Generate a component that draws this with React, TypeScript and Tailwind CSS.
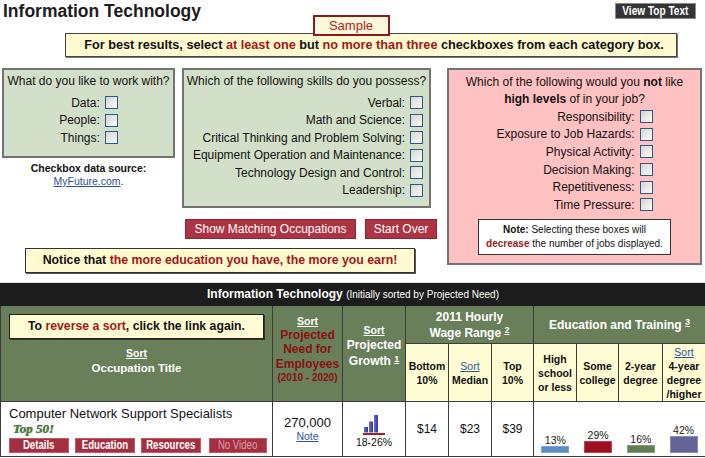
import React from "react";

const CB = () => (
  <span className="inline-block w-[13px] h-[13px] border border-[#2a5a8a] bg-linear-to-br from-[#d6d6d0] to-[#fbfbf9] shrink-0" />
);

function Row({ label, h }: { label: string; h: string }) {
  return (
    <div className={"flex items-center justify-end gap-[5px] " + h}>
      <span>{label}:</span>
      <CB />
    </div>
  );
}

const ROW = "h-[17.5px]";
const ROWP = "h-[17.6px]";

function Bar({ pct, h, color }: { pct: string; h: string; color: string }) {
  return (
    <div className="flex-1 flex flex-col items-center justify-end">
      <div className="text-[10.5px] leading-[12px] text-[#222]">{pct}</div>
      <div className={"w-[28px] border " + h + " " + color} />
    </div>
  );
}

function RedBtn({ label, muted }: { label: string; muted?: boolean }) {
  return (
    <div
      className={
        "h-[15px] bg-[#a52f3f] border border-[#c25a68] flex justify-center items-center overflow-visible " +
        (muted ? "w-[58px] ml-[2px] text-[#dba0a8] font-normal" : "w-[60px] text-white font-bold")
      }
    >
      <span className="inline-block whitespace-nowrap text-[12px] leading-[13px] scale-x-[0.8]">{label}</span>
    </div>
  );
}

export default function App() {
  return (
    <div className="w-[705px] bg-white text-[#111] font-['Liberation_Sans',Arial,sans-serif] text-[12px]">
      {/* Title row */}
      <div className="flex items-start justify-between">
        <h1 className="ml-[3px] text-[17.5px] font-bold leading-[22px] text-[#1c1c1c]">Information Technology</h1>
        <div className="mt-[3px] mr-[9px] h-[16px] w-[81px] bg-[#353535] border border-[#8a8a8a] text-white flex justify-center items-center">
          <span className="inline-block whitespace-nowrap text-[12px] font-bold leading-[14px] scale-x-[0.84]">View Top Text</span>
        </div>
      </div>
      <div className="relative z-10 -mt-[7px] flex justify-center pr-[3px]">
        <div className="w-[77px] h-[21px] border-2 border-[#8b1a1a] bg-[#fff8dc] text-[#b21a1a] text-[13px] leading-[17px] text-center">
          Sample
        </div>
      </div>
      <div className="-mt-[3px] ml-[65px] w-[612px] h-[24px] border border-[#444] shadow-[1px_1px_0_0_#777] bg-[#fffad0] text-center text-[12.7px] font-bold leading-[22px] pl-[6px]">
        For best results, select <span className="text-[#a01818]">at least one</span> but{" "}
        <span className="text-[#a01818]">no more than three</span> checkboxes from each category box.
      </div>

      {/* Category boxes */}
      <div className="flex mt-[11px] ml-[2px]">
        <div className="w-[438px]">
          <div className="flex gap-[7px] items-start">
            <div className="w-[173px]">
              <div className="h-[90px] bg-[#d3e0c9] border-2 border-[#737373] pt-[3px]">
                <div className="text-center leading-[16px]">What do you like to work with?</div>
                <div className="w-fit mx-auto mt-[5px]">
                  <Row label="Data" h={ROW} />
                  <Row label="People" h={ROW} />
                  <Row label="Things" h={ROW} />
                </div>
              </div>
              <div className="text-center text-[10.5px] leading-[13px] mt-[4px]">
                <div className="font-bold">Checkbox data source:</div>
                <div>
                  <span className="text-[#2d4f9e] underline">MyFuture.com</span>.
                </div>
              </div>
            </div>
            <div className="w-[249px] h-[140px] bg-[#d3e0c9] border-2 border-[#737373] pt-[3px]">
              <div className="text-center leading-[16px]">Which of the following skills do you possess?</div>
              <div className="w-fit mx-auto mt-[5px] pl-[3px]">
                <Row label="Verbal" h={ROW} />
                <Row label="Math and Science" h={ROW} />
                <Row label="Critical Thinking and Problem Solving" h={ROW} />
                <Row label="Equipment Operation and Maintenance" h={ROW} />
                <Row label="Technology Design and Control" h={ROW} />
                <Row label="Leadership" h={ROW} />
              </div>
            </div>
          </div>
          <div className="flex justify-end gap-[9px] mt-[11px] pr-[3px]">
            <div className="w-[171px] h-[20px] bg-[#ad3444] border border-[#8e2534] text-white text-[12px] leading-[18px] text-center">
              Show Matching Occupations
            </div>
            <div className="w-[72px] h-[20px] bg-[#ad3444] border border-[#8e2534] text-white text-[12px] leading-[18px] text-center">
              Start Over
            </div>
          </div>
          <div className="ml-[23px] w-[390px] mt-[9px] h-[25px] border border-[#333] shadow-[1px_1px_0_0_#555] bg-[#fffad0] text-center text-[12.3px] font-bold leading-[23px]">
            Notice that <span className="text-[#a01818]">the more education you have, the more you earn!</span>
          </div>
        </div>
        <div className="ml-[7px] w-[255px] h-[197px] bg-[#ffc1c1] border-2 border-[#737373] pt-[4px]">
          <div className="text-center leading-[17px]">
            Which of the following would you <b>not</b> like
            <br />
            <b>high levels</b> of in your job?
          </div>
          <div className="w-fit mx-auto">
            <Row label="Responsibility" h={ROWP} />
            <Row label="Exposure to Job Hazards" h={ROWP} />
            <Row label="Physical Activity" h={ROWP} />
            <Row label="Decision Making" h={ROWP} />
            <Row label="Repetitiveness" h={ROWP} />
            <Row label="Time Pressure" h={ROWP} />
          </div>
          <div className="mx-auto mt-[5px] w-[193px] h-[36px] bg-white border border-[#333] text-center text-[10px] leading-[14px] pt-[3px]">
            <b>Note:</b> Selecting these boxes will
            <br />
            <b className="text-[#a01818]">decrease</b> the number of jobs displayed.
          </div>
        </div>
      </div>

      {/* Table */}
      <div className="mt-[9px] h-[1px] bg-[#e2e2e2]" />
      <table className="w-[705px] table-fixed border-collapse">
        <colgroup>
          <col className="w-[272px]" />
          <col className="w-[70px]" />
          <col className="w-[63px]" />
          <col className="w-[43px]" />
          <col className="w-[43px]" />
          <col className="w-[42px]" />
          <col className="w-[43px]" />
          <col className="w-[42px]" />
          <col className="w-[44px]" />
          <col className="w-[43px]" />
        </colgroup>
        <thead>
          <tr>
            <th colSpan={10} className="h-[22px] bg-[#1c1c1c] border border-[#1c1c1c] text-white text-[12px] font-bold leading-[20px]">
              Information Technology <span className="text-[10px] font-normal">(Initially sorted by Projected Need)</span>
            </th>
          </tr>
          <tr>
            <th rowSpan={2} className="border border-[#3b3b3b] bg-[#687f5a] align-top px-[8px] pt-[8px] font-bold">
              <div className="h-[25px] bg-[#fffbd2] border border-[#222] shadow-[1px_1px_0_0_#333] text-[12.25px] leading-[23px] text-[#111]">
                To <span className="text-[#a01818]">reverse a sort</span>, click the link again.
              </div>
              <div className="mt-[8px] text-[10.5px] leading-[13px] text-white underline">Sort</div>
              <div className="text-[11.5px] leading-[16px] text-white">Occupation Title</div>
            </th>
            <th rowSpan={2} className="border border-[#3b3b3b] bg-[#687f5a] align-middle pb-[8px] font-bold">
              <div className="text-[10.5px] leading-[14px] text-white underline">Sort</div>
              <div className="text-[12px] leading-[14.6px] text-[#8b1010]">
                Projected
                <br />
                Need for
                <br />
                Employees
              </div>
              <div className="text-[10px] leading-[14px] text-[#8b1010]">(2010 - 2020)</div>
            </th>
            <th rowSpan={2} className="border border-[#3b3b3b] bg-[#687f5a] align-middle pb-[15px] font-bold text-white">
              <div className="text-[10.5px] leading-[15px] underline">Sort</div>
              <div className="text-[12px] leading-[15.5px]">
                Projected
                <br />
                Growth <span className="text-[9px] underline align-top leading-[10px]">1</span>
              </div>
            </th>
            <th colSpan={3} className="h-[38px] border border-[#3b3b3b] bg-[#687f5a] text-white text-[12px] font-bold leading-[16px]">
              2011 Hourly
              <br />
              Wage Range <span className="text-[9px] underline align-top leading-[10px]">2</span>
            </th>
            <th colSpan={4} className="border border-[#3b3b3b] bg-[#687f5a] text-white text-[12px] font-bold leading-[16px]">
              Education and Training <span className="text-[9px] underline align-top leading-[10px]">3</span>
            </th>
          </tr>
          <tr className="h-[58px] text-[10.5px] leading-[14px] font-bold text-[#111]">
            <th className="border border-[#3b3b3b] bg-[#fffbd2]">
              Bottom
              <br />
              10%
            </th>
            <th className="border border-[#3b3b3b] bg-[#fffbd2]">
              <div className="font-normal text-[#2d56a0] underline">Sort</div>
              Median
            </th>
            <th className="border border-[#3b3b3b] bg-[#fffbd2]">
              Top
              <br />
              10%
            </th>
            <th className="border border-[#3b3b3b] bg-[#fffbd2]">
              High
              <br />
              school
              <br />
              or less
            </th>
            <th className="border border-[#3b3b3b] bg-[#fffbd2]">
              Some
              <br />
              college
            </th>
            <th className="border border-[#3b3b3b] bg-[#fffbd2]">
              2-year
              <br />
              degree
            </th>
            <th className="border border-[#3b3b3b] bg-[#fffbd2]">
              <div className="font-normal text-[#2d56a0] underline">Sort</div>
              4-year
              <br />
              degree
              <br />
              /higher
            </th>
          </tr>
        </thead>
        <tbody>
          <tr className="h-[55px]">
            <td className="border border-[#3b3b3b] align-middle pl-[8px]">
              <div className="text-[13px] leading-[16px] text-[#111]">Computer Network Support Specialists</div>
              <div className="pl-[4px] font-['Liberation_Serif',serif] italic font-bold text-[13px] leading-[14px] text-[#527a40] [text-shadow:0_0_1px_#3c5a2e]">
                Top 50!
              </div>
              <div className="mt-[2px] flex gap-[6px]">
                <RedBtn label="Details" />
                <RedBtn label="Education" />
                <RedBtn label="Resources" />
                <RedBtn label="No Video" muted />
              </div>
            </td>
            <td className="border border-[#3b3b3b] text-center align-middle">
              <div className="text-[13px] leading-[15px]">270,000</div>
              <div className="text-[10.5px] leading-[13px] text-[#2d56a0] underline">Note</div>
            </td>
            <td className="border border-[#3b3b3b] text-center align-middle pt-[5px]">
              <svg width="24" height="21" viewBox="0 0 24 21" className="mx-auto block">
                <defs>
                  <linearGradient id="gb" x1="0" x2="1" y1="0" y2="0">
                    <stop offset="0" stopColor="#6b6bd8" />
                    <stop offset="1" stopColor="#3232a0" />
                  </linearGradient>
                </defs>
                <rect x="2" y="12" width="4" height="5.5" fill="url(#gb)" />
                <rect x="7" y="6.5" width="4" height="11" fill="url(#gb)" />
                <rect x="12" y="0" width="4" height="17.5" fill="url(#gb)" />
                <rect x="1" y="18" width="22" height="2" fill="#b01c1c" />
              </svg>
              <div className="text-[10.5px] leading-[12px] text-[#111]">18-26%</div>
            </td>
            <td className="border border-[#3b3b3b] text-center align-middle text-[12px]">$14</td>
            <td className="border border-[#3b3b3b] text-center align-middle text-[12px]">$23</td>
            <td className="border border-[#3b3b3b] text-center align-middle text-[12px]">$39</td>
            <td colSpan={4} className="border border-[#3b3b3b] align-bottom pb-[3px]">
              <div className="flex items-end">
                <Bar pct="13%" h="h-[7px]" color="bg-[#5b8fc4] border-[#7aa6d2]" />
                <Bar pct="29%" h="h-[12px]" color="bg-[#9c1022] border-[#c04050]" />
                <Bar pct="16%" h="h-[8px]" color="bg-[#5f7f52] border-[#86a078]" />
                <Bar pct="42%" h="h-[17px]" color="bg-[#646498] border-[#8a8ab8]" />
              </div>
            </td>
          </tr>
        </tbody>
      </table>
    </div>
  );
}
